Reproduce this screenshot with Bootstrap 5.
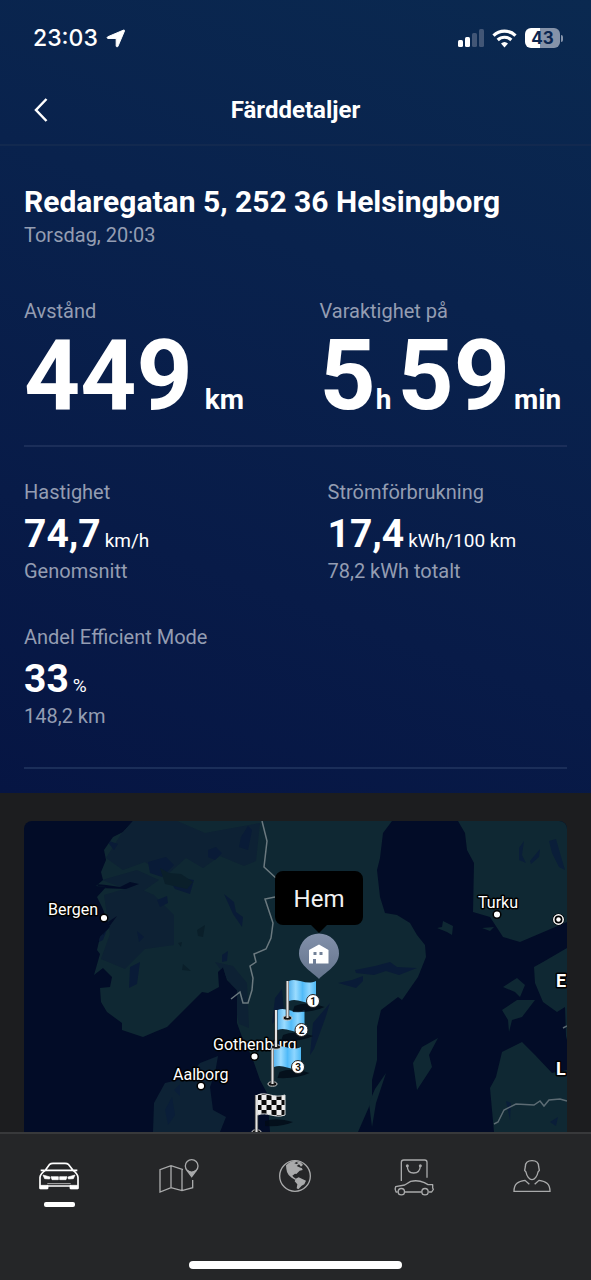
<!DOCTYPE html>
<html lang="sv" data-bs-theme="dark">
<head>
<meta charset="utf-8">
<meta name="viewport" content="width=device-width, initial-scale=1">
<title>Färddetaljer</title>
<link href="https://cdn.jsdelivr.net/npm/bootstrap@5.3.0/dist/css/bootstrap.min.css" rel="stylesheet">
<style>
  body { font-family: Roboto, "Noto Sans", sans-serif; background: #1c1d1f; color: #fff; }
  .trip { background: linear-gradient(200deg, #0a2950 0%, #09224d 35%, #081b48 70%, #061543 100%); padding-bottom: 24px; }
  .status { font-family: Inter, sans-serif; font-size: 23px; line-height: 28px; font-weight: 500; padding: 24px 28px 20px 33px; }
  .battery-level { width: 35px; height: 20px; border-radius: 6px; background: linear-gradient(90deg, #fff 43%, #8593a9 43%); color: #0b2650; font-size: 17px; line-height: 20px; font-weight: 700; }
  .battery-tip { width: 2px; height: 7px; background: #8593a9; border-radius: 0 2px 2px 0; margin-left: 1px; }
  .topbar { height: 74px; border-bottom: 2px solid #12294f; padding: 4px 25px 0; }
  .topbar h1 { font-size: 24px; line-height: 28px; font-weight: 700; }
  .back { width: 32px; height: 44px; }
  .details { padding: 37px 24px 0; }
  .address { font-size: 30px; line-height: 38px; font-weight: 700; }
  .muted { font-size: 20px; line-height: 28px; color: #949db2; }
  .halves { display: grid; grid-template-columns: 1fr 1fr; }
  .totals { column-gap: 48px; padding: 48px 0 18px; border-bottom: 2px solid #1b2e59; }
  .total-value { font-size: 98px; line-height: 102px; font-weight: 700; white-space: nowrap; }
  .total-value small { font-size: 28px; line-height: 1; font-weight: 700; }
  .total-value .km { margin-left: 12px; }
  .total-value .hours { margin-right: 6px; }
  .total-value .minutes { margin-left: 4px; }
  .stats { gap: 38px 64px; padding: 31px 0 37px; border-bottom: 2px solid #1b2e59; }
  .stat-value { font-size: 39px; line-height: 45px; padding-top: 6px; font-weight: 700; white-space: nowrap; }
  .stat-value small { font-size: 19px; line-height: 1; font-weight: 400; }
  .map-wrap { padding: 28px 24px 0; min-height: 339px; }
  .trip-map { border-radius: 8px 8px 0 0; background: #020c27; min-height: 311px; }
  .place { font-size: 16px; fill: #fff; stroke: #000; stroke-width: 3px; paint-order: stroke; stroke-linejoin: round; }
  .tabbar { background: #252628; border-top: 2px solid #38393b; padding-top: 24px; }
  .tabbar a { color: #a9aaab; }
  .tabbar a.active { color: #fff; }
  .tabbar a::after { content: ""; width: 31px; height: 5px; border-radius: 2px; margin-top: 4px; }
  .tabbar a.active::after { background: #fff; }
  .home-bar { width: 36%; height: 8px; border-radius: 4px; background: #fff; margin: 54px auto 12px; }
</style>
</head>
<body>
<div class="min-vh-100 d-flex flex-column">
  <header class="trip">
    <div class="status d-flex justify-content-between align-items-center">
      <div class="d-flex align-items-center gap-2">
        <span>23:03</span>
        <svg width="19" height="19" viewBox="0 0 20 20" fill="#fff" stroke="#fff" stroke-linejoin="round" aria-hidden="true"><path d="M18.600 1.100c.6-.3 1.100.3.9.9L12.600 18.200c-.4.9-1.700.8-1.900-.2V10H2.100c-1-.1-1.200-1.300-.3-1.800z"/></svg>
      </div>
      <div class="d-flex align-items-center gap-2">
        <svg width="26" height="18" viewBox="0 0 26 18" aria-hidden="true"><g fill="#fff"><rect y="11" width="5" height="7" rx="1.500"/><rect x="7" y="8" width="5" height="10" rx="1.500"/></g><g fill="#425676"><rect x="14" y="4" width="5" height="14" rx="1.500"/><rect x="21" width="5" height="18" rx="1.500"/></g></svg>
        <svg width="25" height="19" viewBox="0 0 25 19" fill="none" stroke="#fff" stroke-width="3.200" aria-hidden="true"><path d="M1.500 6.600a15.800 15.800 0 0 1 22 0"/><path d="M5.700 11a9.800 9.800 0 0 1 13.600 0"/><path d="M9 14.600a5.200 5.200 0 0 1 7 0L12.500 18.400z" fill="#fff" stroke="none"/></svg>
        <div class="d-flex align-items-center"><span class="battery-level text-center">43</span><span class="battery-tip"></span></div>
      </div>
    </div>
    <div class="topbar d-flex align-items-center justify-content-between">
      <button type="button" class="back btn p-0 border-0 d-flex align-items-center justify-content-center" aria-label="Tillbaka">
        <svg width="16" height="26" viewBox="0 0 16 26" fill="none" stroke="#fff" stroke-width="2.500"><path d="M13.500 2 3 13l10.500 11"/></svg>
      </button>
      <h1 class="m-0">Färddetaljer</h1>
      <span class="back"></span>
    </div>
    <div class="details">
      <h2 class="address m-0">Redaregatan 5, 252 36 Helsingborg</h2>
      <div class="muted">Torsdag, 20:03</div>
      <div class="totals halves">
        <div><div class="muted">Avstånd</div><div class="total-value">449<small class="km">km</small></div></div>
        <div><div class="muted">Varaktighet på</div><div class="total-value">5<small class="hours">h</small>59<small class="minutes">min</small></div></div>
      </div>
      <div class="stats halves">
        <div><div class="muted">Hastighet</div><div class="stat-value">74,7<small class="ms-1">km/h</small></div><div class="muted">Genomsnitt</div></div>
        <div><div class="muted">Strömförbrukning</div><div class="stat-value">17,4<small class="ms-1">kWh/100 km</small></div><div class="muted">78,2 kWh totalt</div></div>
        <div><div class="muted">Andel Efficient Mode</div><div class="stat-value">33<small class="ms-1">%</small></div><div class="muted">148,2 km</div></div>
      </div>
    </div>
  </header>

  <main class="map-wrap flex-grow-1 d-flex">
    <svg class="trip-map w-100" viewBox="24 821 543 311" preserveAspectRatio="xMidYMin slice" role="img" aria-label="Karta över resan">
      <defs>
        <linearGradient id="cloth"><stop offset="0" stop-color="#58b4ee"/><stop offset=".25" stop-color="#9bdcff"/><stop offset=".5" stop-color="#50baf8"/><stop offset=".75" stop-color="#8ed6ff"/><stop offset="1" stop-color="#4db9f5"/></linearGradient>
        <linearGradient id="pin" x2="0" y2="1"><stop offset="0" stop-color="#8290aa"/><stop offset="1" stop-color="#64748c"/></linearGradient>
        <pattern id="check" width="10" height="10" patternUnits="userSpaceOnUse"><path fill="#eee" d="M0 0h10v10H0z"/><path fill="#0a0a0a" d="M0 0h5v5H0zM5 5h5v5H5z"/></pattern>
        <g id="pole"><ellipse cy="37" rx="4.500" ry="2.200" fill="#111" stroke="#ccc"/><path d="M0 0v37" stroke="#333" stroke-width="3.500"/><path d="M0 0v37" stroke="#e3e3e3" stroke-width="2"/></g>
        <g id="flag"><path d="M7 25q12-5 30 1-12 6-32 5z" fill="#010a16" opacity=".8"/><use href="#pole"/><path d="M1.500 0C10-4 18 5 28.500 0v21C18 25 11 16 1.500 20z" fill="url(#cloth)"/><circle cx="25.500" cy="20" r="6.500" fill="#fff" stroke="#222"/></g>
        <clipPath id="land-clip"><use href="#land"/></clipPath>
      </defs>
      <g fill="#0f2833">
        <path id="land" d="M133 821 123 832 113 837 104 850 106 860 101 872 103 880 96 886 106 887 97 897 102 907 106 917 110 927 100 937 97 950 100 954 94 975 103 968 112 977 110 987 100 988 101 1002 107 1012 122 1023 122 1030 143 1037 157 1031 167 1027 202 992 208 993 219 987 218 972 223 967 227 980 237 990 237 1023 242 1037 252 1057 260 1080 267 1093 270 1132H358L372 1100 372 1080 377 1060 377 1027 381 1010 398 997 402 1000 418 977 426 957 425 945 417 935 410 923 397 915 385 913 380 897 377 870 380 858 383 833 392 821Z"/>
        <path d="m458 821 7 12 2 17 7 13-1 49 17 5 13 20 17 5 47-20V821ZM567 948l-24 14-9 5 1 16 8 19 14 10 8-5 1 29 1 4ZM567 1070l-15 3-17-18-13-13-20 10-6 25-6 11 4 44h73Z"/>
        <path d="m503 987 14-9 8 7-5 12-5-5ZM502 1010l15-10 18 0-13 17-10 3-3 12-1-12ZM413 1063l9-16 16-9-9 17 3 12-15 23ZM386 1073l-10 30-4 24-3-24 6-14ZM437 928l5-1 1-6 10 5-1 9-5-3ZM482 928l12-1-4 4Z"/>
        <path fill="#0d2235" d="m218 1056-3 17-5 14 3 23 13 7-6 15h-67l1-29 11-20 22-5 13-15Z"/>
      </g>
      <g clip-path="url(#land-clip)">
        <g fill="#0d2134"><path d="m130 820 40-2 35 15 55-10-4 38-12 5-24-10-17 12-17-10-20 18-21-14-22 8-17-12ZM104 895l30-9 20 9 20 20 0 30-29 4-20 20-24-10 9-25ZM215 962l18 4 14 17 2 45-10-4-8-40ZM102 880l35-10 22 10-20 14Z"/></g>
        <g fill="#091b37"><path d="m148 862 18-5 8 8-12 12-12-4ZM166 875l28 5-4 14-15-5ZM241 837l7-11 4 4-4 20-9-3ZM208 850l8-3 6 6-7 7-7-3ZM224 894l10 8 2 10 7 5-1 10-9-13ZM130 967l10-5-3 22-8 4ZM157 900l10-4 1 7-8 4ZM137 931l7 6-5 5ZM222 955l6-4-1 10-5 1ZM275 998l7-9 2 23-12 12ZM313 1023l17-20-5 16-11 30-4 6ZM338 983l14-3 11-4 0 5-7 7ZM355 970l20-4 15-4 7 5 20 1-18 7-13-4-12 4-18-2ZM106 840l12 4-4 6ZM96 937l12-10-5 13-10 5Z"/></g>
        <path fill="#020c27" d="M96 884l10 1 14 2 10-5 9 2-13 5-26-1ZM102 926l15-10-14 19Z"/>
        <path fill="#0a1f2a" d="m160 868 9 5 12 1 12 8-6 7-22-5ZM197 930l8-5-2 12-5-1ZM183 964l8 7-9-1ZM178 943l4-1-1 5Z"/>
      </g>
      <g fill="#0a1e39"><path d="m519 848 5-7-2 14 4 8-7-3ZM530 861l10-12-1 8-8 7ZM549 841l7-2 4 14 5 17-6-3-7-14ZM165 1110l7-13 3 18-7 10ZM174 1090l6-6 0 12ZM510 1120l-4-19 5 2ZM550 1122l8-5-2 9Z"/></g>
      <path d="m262 821 5 20-3 26 13 12M275 897l-10 2 8 24-2 15-5 11-12 5 2 8-6 4 3 12-1 12-4 13h-5l-3-11-9 7" fill="none" stroke="#6b797f" stroke-width="1.500"/>
      <path d="m494 1124 4-2 6-12 12-6 18 1 6-4 4 5 5-6 11-1 7 2M563 1028l4-2" fill="none" stroke="#5c6b73" stroke-width="1.500"/>
      <g class="place">
        <text x="48" y="915">Bergen</text><text x="213" y="1050">Gothenburg</text><text x="173" y="1080">Aalborg</text><text x="478" y="908">Turku</text>
        <text x="556" y="987" font-size="18" font-weight="700">E</text><text x="556" y="1075" font-size="18" font-weight="700">L</text>
      </g>
      <g fill="#fff" stroke="#000" stroke-width="1.500"><circle cx="104" cy="918" r="3.800"/><circle cx="254.500" cy="1056.500" r="3.800"/><circle cx="201" cy="1086" r="3.800"/><circle cx="497" cy="914.500" r="3.800"/></g>
      <circle cx="558.500" cy="919.500" r="6" fill="#000"/><circle cx="558.500" cy="919.500" r="4.700" fill="none" stroke="#fff" stroke-width="1.500"/><circle cx="558.500" cy="919.500" r="2.200" fill="#fff"/>
      <path d="M265 1121q12-4 28 1-10 5-28 4Z" fill="#010a16" opacity=".8"/>
      <g transform="translate(256.500 1095)"><use href="#pole"/><path d="M1 0C10-4 17 4 28.500 0v20C18 24 11 16 1 20z" fill="url(#check)" stroke="#ddd"/></g>
      <use href="#flag" x="272.500" y="1047"/><use href="#flag" x="276" y="1010"/><use href="#flag" x="287.500" y="981"/>
      <g font-size="10" font-weight="700" fill="#111" text-anchor="middle"><text x="298" y="1071">3</text><text x="301.500" y="1034">2</text><text x="313" y="1005">1</text></g>
      <path d="M319 979C314 973 299 966 299 953.500a20 20 0 0 1 40 0C339 966 324 973 319 979Z" fill="url(#pin)"/>
      <path d="M309 950 319 944.500 328.500 950V963.500H316v-4.500h-3v4.500h-4Z" fill="#fff"/><path d="M313.500 952h3v3h-3zm6 0h3v3h-3z" fill="#718096"/>
      <path d="M283 871h72a8 8 0 0 1 8 8v38a8 8 0 0 1-8 8h-28l-8 8-8-8h-28a8 8 0 0 1-8-8v-38a8 8 0 0 1 8-8Z" fill="#000"/>
      <text x="319" y="907" text-anchor="middle" font-size="24" fill="#f2f2f2">Hem</text>
    </svg>
  </main>

  <nav class="tabbar" aria-label="Huvudmeny">
    <div class="row g-0 row-cols-5">
      <a href="#bil" class="active d-flex flex-column align-items-center" aria-label="Bil" aria-current="page">
        <svg width="46" height="40" viewBox="109 96 138 120" fill="none" stroke="currentColor" stroke-width="5" stroke-linejoin="round"><path d="M137 133 150 115Q153 112 160 112H196Q203 112 206 115L220 133Z"/><path d="M137 133Q122 143 121 154V187H143V180H213V187H235V154Q234 143 220 133"/><path d="M123 133H135M221 133H233"/><path d="M122 178H145V188H122ZM211 178H234V188H211ZM130 147 151 153 150 159 135 158ZM226 147 205 153 206 159 221 158ZM154 152H176V161H157ZM180 152H202L199 161H180Z" fill="currentColor" stroke-width="2"/><path d="M143 173H213" stroke-width="2"/></svg>
      </a>
      <a href="#karta" class="d-flex flex-column align-items-center" aria-label="Karta">
        <svg width="46" height="40" viewBox="463 96 138 120" fill="none" stroke="currentColor" stroke-width="4"><path d="M550 131 514 119 481 131V198L514 185 547 194 579 185V162M514 119V185M547 130V194"/><circle cx="576" cy="120" r="19"/><path d="M562 133 576 152 590 133Q576 145 562 133Z" fill="currentColor"/></svg>
      </a>
      <a href="#utforska" class="d-flex flex-column align-items-center" aria-label="Utforska">
        <svg width="46" height="40" viewBox="817 96 138 120"><circle cx="886" cy="150" r="46" fill="none" stroke="currentColor" stroke-width="4"/><path fill="currentColor" d="M859 118Q868 106 886 104L902 108 910 116 904 122 898 115 891 120 899 124 907 127 909 132 900 134 890 144 886 143 878 149 882 154 889 158 886 161 876 155 867 147 862 138 860 128ZM884 112 890 108 896 111 891 114ZM888 158 897 154 908 159 919 164 914 175 906 179 896 190 891 187 893 175 885 166Z" fill-rule="evenodd"/></svg>
      </a>
      <a href="#butik" class="d-flex flex-column align-items-center" aria-label="Butik">
        <svg width="46" height="40" viewBox="302 96 138 120" fill="none" stroke="currentColor" stroke-width="4" stroke-linejoin="round"><path d="M333 165V109Q333 102 340 102H403Q410 102 410 109V155"/><path d="M351 120Q351 141 370 141T390 120"/><g fill="currentColor" stroke="none"><circle cx="351" cy="119" r="4.500"/><circle cx="390" cy="119" r="4.500"/></g><path d="M322 198H317Q312 190 316 182L343 177 361 166Q383 161 402 170L413 176H427V186L429 190 424 198H415M394 198H344"/><circle cx="333" cy="197" r="9.500"/><circle cx="404" cy="197" r="9.500"/></svg>
      </a>
      <a href="#profil" class="d-flex flex-column align-items-center" aria-label="Profil">
        <svg width="46" height="40" viewBox="656 96 138 120" fill="none" stroke="currentColor" stroke-width="4"><path d="M725 104C739 104 745 112 745 122L747 133 743 138C741 150 733 161 725 161S709 150 707 138L703 133 705 122C705 112 711 104 725 104Z"/><path d="M717 175 704 163C684 166 671 172 671 196H779C779 172 766 166 746 163L733 175"/></svg>
      </a>
    </div>
    <div class="home-bar"></div>
  </nav>
</div>
<script src="https://cdn.jsdelivr.net/npm/bootstrap@5.3.0/dist/js/bootstrap.bundle.min.js"></script>
</body>
</html>
